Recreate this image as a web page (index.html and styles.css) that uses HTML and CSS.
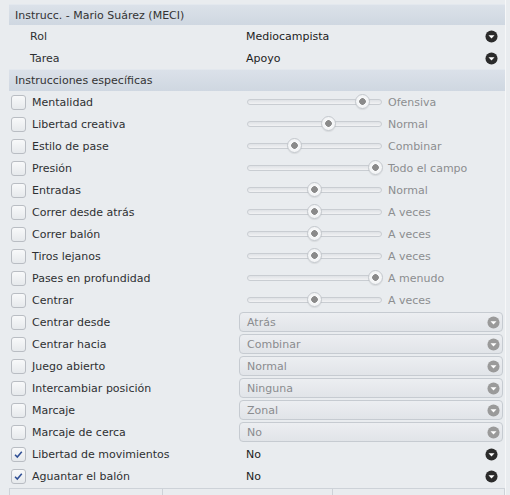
FILE: index.html
```
<!DOCTYPE html>
<html>
<head>
<meta charset="utf-8">
<link rel="stylesheet" href="styles.css">
</head>
<body>
<div class="panel">
  <div class="hdr">Instrucc. - Mario Suárez (MECI)</div>
  <div class="row"><div class="left plain">Rol</div><div class="ctl dd"><span>Mediocampista</span><svg class="arr" viewBox="0 0 14 14"><circle cx="7" cy="7" r="6.5" fill="#2b2b2b"/><path d="M3.8 5.6h6.4L7 9.2z" fill="#fff"/></svg></div></div>
  <div class="row"><div class="left plain">Tarea</div><div class="ctl dd"><span>Apoyo</span><svg class="arr" viewBox="0 0 14 14"><circle cx="7" cy="7" r="6.5" fill="#2b2b2b"/><path d="M3.8 5.6h6.4L7 9.2z" fill="#fff"/></svg></div></div>
  <div class="hdr hdr2">Instrucciones específicas</div>

  <div class="row"><div class="left"><span class="cb"></span>Mentalidad</div><div class="ctl sl"><div class="track"><span class="knob" style="left:114px"></span></div><span class="val">Ofensiva</span></div></div>
  <div class="row"><div class="left"><span class="cb"></span>Libertad creativa</div><div class="ctl sl"><div class="track"><span class="knob" style="left:80px"></span></div><span class="val">Normal</span></div></div>
  <div class="row"><div class="left"><span class="cb"></span>Estilo de pase</div><div class="ctl sl"><div class="track"><span class="knob" style="left:46px"></span></div><span class="val">Combinar</span></div></div>
  <div class="row"><div class="left"><span class="cb"></span>Presión</div><div class="ctl sl"><div class="track"><span class="knob" style="left:127px"></span></div><span class="val">Todo el campo</span></div></div>
  <div class="row"><div class="left"><span class="cb"></span>Entradas</div><div class="ctl sl"><div class="track"><span class="knob" style="left:66px"></span></div><span class="val">Normal</span></div></div>
  <div class="row"><div class="left"><span class="cb"></span>Correr desde atrás</div><div class="ctl sl"><div class="track"><span class="knob" style="left:66px"></span></div><span class="val">A veces</span></div></div>
  <div class="row"><div class="left"><span class="cb"></span>Correr balón</div><div class="ctl sl"><div class="track"><span class="knob" style="left:66px"></span></div><span class="val">A veces</span></div></div>
  <div class="row"><div class="left"><span class="cb"></span>Tiros lejanos</div><div class="ctl sl"><div class="track"><span class="knob" style="left:66px"></span></div><span class="val">A veces</span></div></div>
  <div class="row"><div class="left"><span class="cb"></span>Pases en profundidad</div><div class="ctl sl"><div class="track"><span class="knob" style="left:127px"></span></div><span class="val">A menudo</span></div></div>
  <div class="row"><div class="left"><span class="cb"></span>Centrar</div><div class="ctl sl"><div class="track"><span class="knob" style="left:66px"></span></div><span class="val">A veces</span></div></div>

  <div class="row"><div class="left"><span class="cb"></span>Centrar desde</div><div class="ctl combo"><span>Atrás</span><svg class="arr2" viewBox="0 0 14 14"><circle cx="7" cy="7" r="6.5" fill="#9a9a9a"/><path d="M3.8 5.6h6.4L7 9.2z" fill="#fff"/></svg></div></div>
  <div class="row"><div class="left"><span class="cb"></span>Centrar hacia</div><div class="ctl combo"><span>Combinar</span><svg class="arr2" viewBox="0 0 14 14"><circle cx="7" cy="7" r="6.5" fill="#9a9a9a"/><path d="M3.8 5.6h6.4L7 9.2z" fill="#fff"/></svg></div></div>
  <div class="row"><div class="left"><span class="cb"></span>Juego abierto</div><div class="ctl combo"><span>Normal</span><svg class="arr2" viewBox="0 0 14 14"><circle cx="7" cy="7" r="6.5" fill="#9a9a9a"/><path d="M3.8 5.6h6.4L7 9.2z" fill="#fff"/></svg></div></div>
  <div class="row"><div class="left"><span class="cb"></span>Intercambiar posición</div><div class="ctl combo"><span>Ninguna</span><svg class="arr2" viewBox="0 0 14 14"><circle cx="7" cy="7" r="6.5" fill="#9a9a9a"/><path d="M3.8 5.6h6.4L7 9.2z" fill="#fff"/></svg></div></div>
  <div class="row"><div class="left"><span class="cb"></span>Marcaje</div><div class="ctl combo"><span>Zonal</span><svg class="arr2" viewBox="0 0 14 14"><circle cx="7" cy="7" r="6.5" fill="#9a9a9a"/><path d="M3.8 5.6h6.4L7 9.2z" fill="#fff"/></svg></div></div>
  <div class="row"><div class="left"><span class="cb"></span>Marcaje de cerca</div><div class="ctl combo"><span>No</span><svg class="arr2" viewBox="0 0 14 14"><circle cx="7" cy="7" r="6.5" fill="#9a9a9a"/><path d="M3.8 5.6h6.4L7 9.2z" fill="#fff"/></svg></div></div>

  <div class="row"><div class="left"><span class="cb on"><svg viewBox="0 0 15 15"><path d="M3.5 7.8l2.6 2.6 5.2-6" fill="none" stroke="#2f4f95" stroke-width="1.8"/></svg></span>Libertad de movimientos</div><div class="ctl dd"><span>No</span><svg class="arr" viewBox="0 0 14 14"><circle cx="7" cy="7" r="6.5" fill="#2b2b2b"/><path d="M3.8 5.6h6.4L7 9.2z" fill="#fff"/></svg></div></div>
  <div class="row"><div class="left"><span class="cb on"><svg viewBox="0 0 15 15"><path d="M3.5 7.8l2.6 2.6 5.2-6" fill="none" stroke="#2f4f95" stroke-width="1.8"/></svg></span>Aguantar el balón</div><div class="ctl dd"><span>No</span><svg class="arr" viewBox="0 0 14 14"><circle cx="7" cy="7" r="6.5" fill="#2b2b2b"/><path d="M3.8 5.6h6.4L7 9.2z" fill="#fff"/></svg></div></div>

  <div class="foot"><div class="fb f1"></div><div class="fb f2"></div><div class="fb f3"></div></div>
</div>
</body>
</html>
```
FILE: styles.css
```
html, body {
  margin: 0;
  padding: 0;
  background: #e9ecef;
}
body {
  width: 510px;
  height: 495px;
  overflow: hidden;
  font-family: "DejaVu Sans", "Liberation Sans", sans-serif;
  font-size: 11px;
  color: #2e3032;
}
.panel {
  padding: 4px 0 0 9px;
  width: 496px;
  border-right: 1px solid #f6f7f8;
  height: 491px;
}
.hdr {
  height: 20px;
  line-height: 21px;
  padding-left: 6px;
  background: linear-gradient(#dbe1e9, #cfd7e1);
  border-top: 1px solid #e3e8ee;
  color: #333;
}
.hdr2 {
  height: 21px;
  line-height: 22px;
}
.row {
  display: flex;
  align-items: center;
  height: 22px;
}
.left {
  width: 230px;
  display: flex;
  align-items: center;
  white-space: nowrap;
}
.left.plain {
  padding-left: 21px;
  width: 209px;
}
.cb {
  width: 13px;
  height: 13px;
  margin-left: 2px;
  margin-right: 6px;
  border: 1px solid #b9bdc3;
  border-radius: 3px;
  background: linear-gradient(#f8f9fa, #e6e9ec);
  display: flex;
}
.cb svg {
  width: 13px;
  height: 13px;
}
.ctl {
  width: 264px;
  display: flex;
  align-items: center;
}
.dd {
  padding-left: 7px;
  width: 257px;
  color: #1d1d1d;
}
.dd span {
  flex: 1;
}
.arr {
  width: 13px;
  height: 13px;
  margin-right: 5px;
}
.sl {
  padding-left: 8px;
  width: 256px;
}
.track {
  position: relative;
  width: 133px;
  height: 4px;
  border: 1px solid #c9cdd2;
  border-radius: 3px;
  background: linear-gradient(#dfe2e6, #f1f2f4);
}
.knob {
  position: absolute;
  top: -6px;
  width: 13px;
  height: 13px;
  margin-left: -7.5px;
  border: 1px solid #c4c8cd;
  border-radius: 50%;
  background: radial-gradient(circle, #8a8a8a 0, #8a8a8a 3px, #f7f8f9 3.6px, #eceef0 100%);
  box-shadow: 0 1px 1px rgba(0,0,0,0.08);
}
.val {
  margin-left: 6px;
  color: #8c8e90;
  white-space: nowrap;
}
.combo {
  box-sizing: border-box;
  height: 20px;
  border: 1px solid #c6cbd1;
  border-radius: 4px;
  background: linear-gradient(#eceef1, #e1e4e8);
  padding-left: 7px;
  color: #8a8c8f;
}
.combo span {
  flex: 1;
}
.arr2 {
  width: 13px;
  height: 13px;
  margin-right: 2px;
}
.foot {
  display: flex;
  margin-top: 1px;
  height: 10px;
}
.fb {
  border-top: 1px solid #cdd2d8;
  border-left: 1px solid #cdd2d8;
  height: 10px;
}
.f1 { width: 152px; }
.f2 { width: 170px; }
.f3 { width: 171px; border-right: 1px solid #cdd2d8; }
```
